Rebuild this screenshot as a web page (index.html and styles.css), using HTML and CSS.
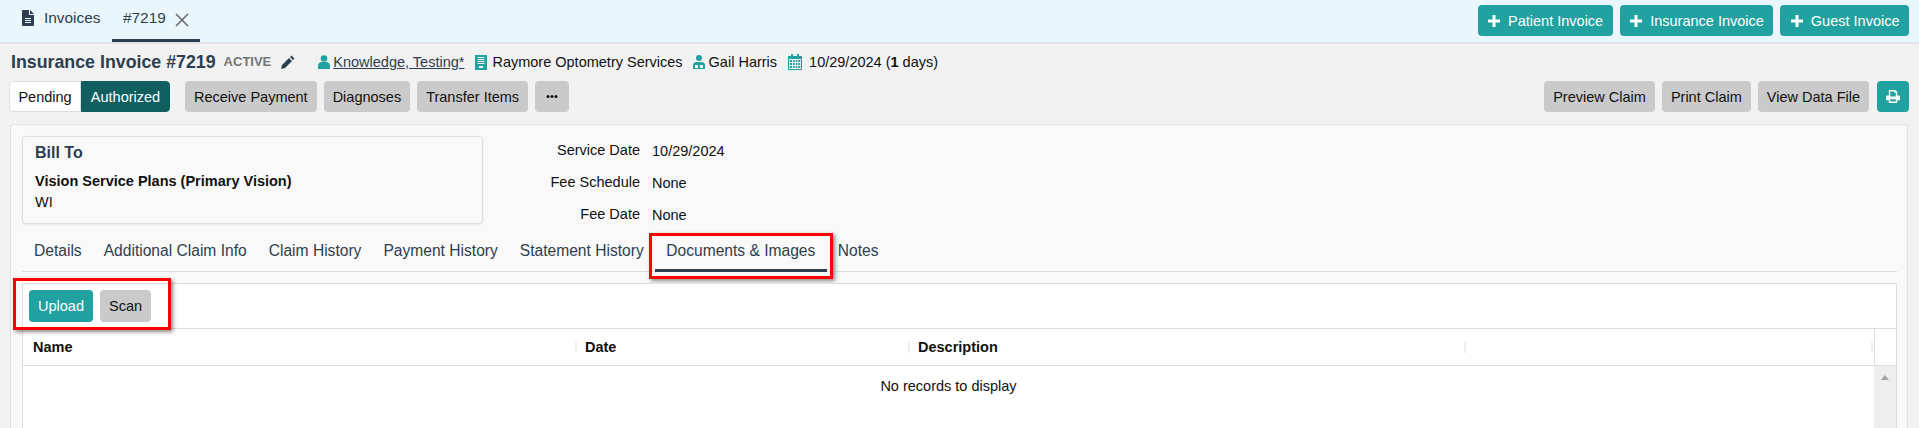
FILE: index.html
```html
<!DOCTYPE html>
<html lang="en">
<head>
<meta charset="utf-8">
<title>Insurance Invoice #7219</title>
<link rel="stylesheet" href="styles.css">
</head>
<body>
<header class="topbar">
  <nav class="toptabs">
    <a class="toptab">
      <svg class="ico-file" viewBox="0 0 12 16"><path d="M0 1a1 1 0 0 1 1-1h6v4a1 1 0 0 0 1 1h4v10a1 1 0 0 1-1 1H1a1 1 0 0 1-1-1zM8 0l4 4H8zM3 8v1h6V8zM3 10v1h6v-1zM3 12v1h6v-1z" fill-rule="evenodd"/></svg>
      Invoices
    </a>
    <a class="toptab active">#7219
      <svg class="ico-x" viewBox="0 0 14 14"><path d="M1 1l12 12M13 1L1 13"/></svg>
    </a>
  </nav>
  <div class="topactions">
    <button class="btn teal"><svg class="ico-plus" viewBox="0 0 12 12"><path d="M4.500 0h3v4.500h4.500v3H7.500V12h-3V7.500H0v-3h4.500z"/></svg>Patient Invoice</button>
    <button class="btn teal"><svg class="ico-plus" viewBox="0 0 12 12"><path d="M4.500 0h3v4.500h4.500v3H7.500V12h-3V7.500H0v-3h4.500z"/></svg>Insurance Invoice</button>
    <button class="btn teal"><svg class="ico-plus" viewBox="0 0 12 12"><path d="M4.500 0h3v4.500h4.500v3H7.500V12h-3V7.500H0v-3h4.500z"/></svg>Guest Invoice</button>
  </div>
</header>

<main class="page">
  <div class="titlerow">
    <h1 class="title">Insurance Invoice #7219</h1>
    <span class="status">ACTIVE</span>
    <svg class="ico-pencil" viewBox="0 0 14 14"><path d="M10.500 0.500l3 3-1.500 1.500-3-3zM8 3l3 3-7 7-4 1 1-4z"/></svg>
    <span class="meta m-patient"><svg class="ico-teal" viewBox="0 0 12 14"><circle cx="6" cy="3.500" r="3.300"/><path d="M0 14v-3C0 8.500 2 7 3.500 7h5C10 7 12 8.500 12 11v3z"/></svg><a class="link">Knowledge, Testing*</a></span>
    <span class="meta m-bldg"><svg class="ico-bldg" viewBox="0 0 12 15"><path fill-rule="evenodd" d="M0 0h12v15H0zM2.500 2v1h7V2zM2.500 4v1h7V4zM2.500 6v1h7V6zM2.500 8v1h7V8zM4 11v2h4v-2z"/></svg>Raymore Optometry Services</span>
    <span class="meta m-doc"><svg class="ico-doc" viewBox="0 0 12 14"><circle cx="6" cy="3" r="3"/><path fill-rule="evenodd" d="M0 14v-4c0-2 2-3 3-3h6c1 0 3 1 3 3v4zM2 10v3h3v-3zM7 10v3h3v-3z"/></svg>Gail Harris</span>
    <span class="meta m-cal"><svg class="ico-cal" viewBox="0 0 14 16"><path fill-rule="evenodd" d="M0 2h3V0h2v2h4V0h2v2h3v14H0zM1 5v10h12V5zM1.700 6h2.300v2H1.700zM5 6h1.700v2H5zM7.700 6h1.700v2H7.700zM10.300 6h2v2h-2zM1.700 9h2.300v2H1.700zM5 9h1.700v2H5zM7.700 9h1.700v2H7.700zM10.300 9h2v2h-2zM1.700 12h2.300v2H1.700zM5 12h1.700v2H5zM7.700 12h1.700v2H7.700zM10.300 12h2v2h-2z"/></svg><span>10/29/2024 (<b>1</b> days)</span></span>
  </div>

  <div class="actionrow">
    <div class="seg"><button class="seg-btn">Pending</button><button class="seg-btn on">Authorized</button></div>
    <div class="group">
      <button class="btn gray">Receive Payment</button>
      <button class="btn gray">Diagnoses</button>
      <button class="btn gray">Transfer Items</button>
      <button class="btn gray more" aria-label="More"><svg viewBox="0 0 12 3"><circle cx="2" cy="1.500" r="1.500"/><circle cx="6" cy="1.500" r="1.500"/><circle cx="10" cy="1.500" r="1.500"/></svg></button>
    </div>
    <div class="group right">
      <button class="btn gray">Preview Claim</button>
      <button class="btn gray">Print Claim</button>
      <button class="btn gray">View Data File</button>
      <button class="btn teal print" aria-label="Print"><svg viewBox="0 0 15 14"><path fill-rule="evenodd" d="M3 0h7l2 2v4h1.500A1.500 1.500 0 0 1 15 7.500V11h-3v3H3v-3H0V7.500A1.500 1.500 0 0 1 1.500 6H3zM4.500 1.500V7h6V3H9V1.500zM4.500 10v2.500h6V10z"/></svg></button>
    </div>
  </div>

  <section class="panel">
    <div class="summary">
      <div class="billto">
        <h2 class="billto-h">Bill To</h2>
        <div class="billto-name">Vision Service Plans (Primary Vision)</div>
        <div class="billto-st">WI</div>
      </div>
      <dl class="facts">
        <dt>Service Date</dt><dd>10/29/2024</dd>
        <dt>Fee Schedule</dt><dd>None</dd>
        <dt>Fee Date</dt><dd>None</dd>
      </dl>
    </div>

    <nav class="tabs">
      <a class="tab">Details</a>
      <a class="tab">Additional Claim Info</a>
      <a class="tab">Claim History</a>
      <a class="tab">Payment History</a>
      <a class="tab">Statement History</a>
      <a class="tab active">Documents &amp; Images<span class="callout"></span></a>
      <a class="tab">Notes</a>
    </nav>

    <div class="grid">
      <div class="toolbar">
        <button class="btn teal">Upload</button>
        <button class="btn gray">Scan</button>
        <span class="callout"></span>
      </div>
      <div class="gridhead">
        <div class="cols">
          <div class="col c-name">Name</div>
          <div class="col c-date">Date</div>
          <div class="col c-desc">Description</div>
          <div class="col c-last"></div>
        </div>
        <div class="sbhead"></div>
      </div>
      <div class="gridbody">
        <div class="empty">No records to display</div>
        <div class="scroll"><span class="arrow"></span></div>
      </div>
    </div>
  </section>
</main>
</body>
</html>
```

FILE: styles.css
```css
* { box-sizing: border-box; }
html, body { height: 100%; overflow: hidden; }
body { margin: 0; background: #f2f2f2; color: #111; font: 14.5px/20px "Liberation Sans", Arial, sans-serif; }
button { font: inherit; border: 0; cursor: pointer; }

.topbar { height: 42px; background: #e9f6fc; display: flex; justify-content: space-between; box-shadow: 0 1px 2px rgba(0,0,0,.12); padding: 5px 10px 0 0; position: relative; }
.toptabs { display: flex; padding-left: 11px; margin-top: -5px; font-size: 15.4px; }
.toptab { display: flex; align-items: center; gap: 9px; padding: 0 10px; height: 42px; color: #2f3e4e; padding-bottom: 6px; width: 101px; }
.toptab.active { border-bottom: 3px solid #2c3e50; padding: 0 11px 3px; gap: 9px; width: 88px; }
.ico-file { width: 14px; height: 16px; fill: #2c3e50; flex: none; }
.ico-x { width: 14px; height: 14px; fill: none; stroke: #666; stroke-width: 1.500; margin-top: 3px; flex: none; }
.topactions { display: flex; gap: 7px; }
.topactions .btn { padding: 0 9.500px; }

.btn { height: 31px; border-radius: 4px; padding: 0 9px; white-space: nowrap; }
.btn.teal { background: #21a19f; color: #fff; }
.btn.gray { background: #cacaca; color: #111; }
.ico-plus { width: 12px; height: 12px; fill: #fff; margin: 0 8px 0 1px; vertical-align: -1px; }

.page { padding: 0 10px; }
.titlerow { display: flex; align-items: center; height: 39px; }
.title { margin: 0 0 0 1px; font-size: 17.800px; font-weight: 700; color: #2c3e50; }
.status { font-size: 13px; font-weight: 700; color: #757575; margin-left: 8px; }
.ico-pencil { width: 14px; height: 14px; fill: #2c3e50; margin-left: 10px; }
.meta { display: flex; align-items: center; gap: 3px; margin-top: 1px; }
.m-patient { margin-left: 23px; }
.m-bldg { margin-left: 11px; gap: 5px; }
.m-doc { margin-left: 10px; gap: 4px; }
.m-cal { margin-left: 11px; gap: 7px; }
.link { color: #2c3e50; text-decoration: underline; }
.ico-teal, .ico-doc { fill: #21a19f; }
.ico-teal { width: 12px; height: 14px; }
.ico-bldg { width: 12px; height: 15px; fill: #21a19f; }
.ico-doc { width: 12px; height: 14px; }
.ico-cal { width: 14px; height: 16px; fill: #21a19f; }

.actionrow { display: flex; height: 31px; }
.seg { display: flex; margin-left: -1px; }
.seg-btn { height: 31px; width: 72px; padding: 0; background: #fff; border: 1px solid #ddd; border-radius: 4px 0 0 4px; color: #111; }
.seg-btn.on { width: 89px; background: #115e5e; border-color: #115e5e; color: #fff; border-radius: 0 4px 4px 0; }
.group { display: flex; gap: 7px; margin-left: 15px; }
.group.right { margin-left: auto; }
.more { width: 34px; display: flex; align-items: center; justify-content: center; }
.more svg { width: 12px; height: 3px; fill: #111; }
.print { width: 32px; margin-left: 1px; display: flex; align-items: center; justify-content: center; padding: 0; }
.print svg { width: 14px; height: 13px; fill: #fff; }

.panel { margin: 12px 1px 0 0; background: #f9f9f9; border: 1px solid #e2e2e2; border-bottom: 0; border-radius: 4px 4px 0 0; padding: 11px 10px 0 11px; height: 304px; }
.summary { display: flex; height: 88px; }
.billto { width: 461px; height: 88px; background: #f9f9f9; border: 1px solid #e0e0e0; border-radius: 4px; box-shadow: 0 1px 2px rgba(0,0,0,.08); padding: 6px 12px; }
.billto-h { margin: 0 0 8px; font-size: 16px; font-weight: 700; color: #2c3e50; line-height: 20px; }
.billto-name { font-weight: 700; }
.billto-st { margin-top: 1px; }
.facts { margin: 4px 0 0; display: grid; grid-template-columns: 157px auto; grid-auto-rows: 32px; column-gap: 12px; }
.facts dt { text-align: right; }
.facts dd { margin: 1px 0 0; }

.tabs { display: flex; height: 48px; border-bottom: 1px solid #ddd; padding-left: 1px; align-items: flex-start; font-size: 15.600px; }
.tab { position: relative; height: 48px; line-height: 54px; padding: 0 11px; color: #2f3e4e; }
.tab.active { border-bottom: 3px solid #2c3e50; padding: 0 11.500px; }

.callout { position: absolute; border: 3px solid #f00; box-shadow: 2px 2px 4px rgba(0,0,0,.45); pointer-events: none; }
.tab .callout { left: -6px; right: -6px; top: 9px; bottom: -10px; }

.grid { position: relative; margin-top: 11px; background: #fff; border: 1px solid #ddd; border-bottom: 0; height: 145px; }
.toolbar { display: flex; gap: 7px; height: 45px; padding: 6px 6px 0 6px; border-bottom: 1px solid #ddd; }
.toolbar .btn { height: 32px; }
.toolbar .btn.teal { width: 64px; padding: 0; }
.toolbar .btn.gray { width: 51px; padding: 0; }
.toolbar .callout { left: -10px; top: -6px; width: 158px; height: 52px; }
.gridhead { display: flex; height: 37px; border-bottom: 1px solid #ddd; }
.cols { flex: 1; display: grid; grid-template-columns: 555px 333px 556px 407px; }
.col { font-weight: 700; padding: 0 7px; line-height: 36px; position: relative; }
.c-name { padding-left: 10px; }
.col::after { content: ""; position: absolute; right: 1px; top: 13px; width: 2px; height: 11px; background: #eee; }
.sbhead { width: 22px; border-left: 1px solid #ddd; }
.gridbody { display: flex; height: 62px; }
.empty { flex: 1; text-align: center; padding-top: 10px; }
.scroll { width: 22px; background: #eee; display: flex; justify-content: center; padding-top: 9px; }
.arrow { width: 0; height: 0; border: 4.500px solid transparent; border-top: 0; border-bottom: 5px solid #a3a3a3; }
```
